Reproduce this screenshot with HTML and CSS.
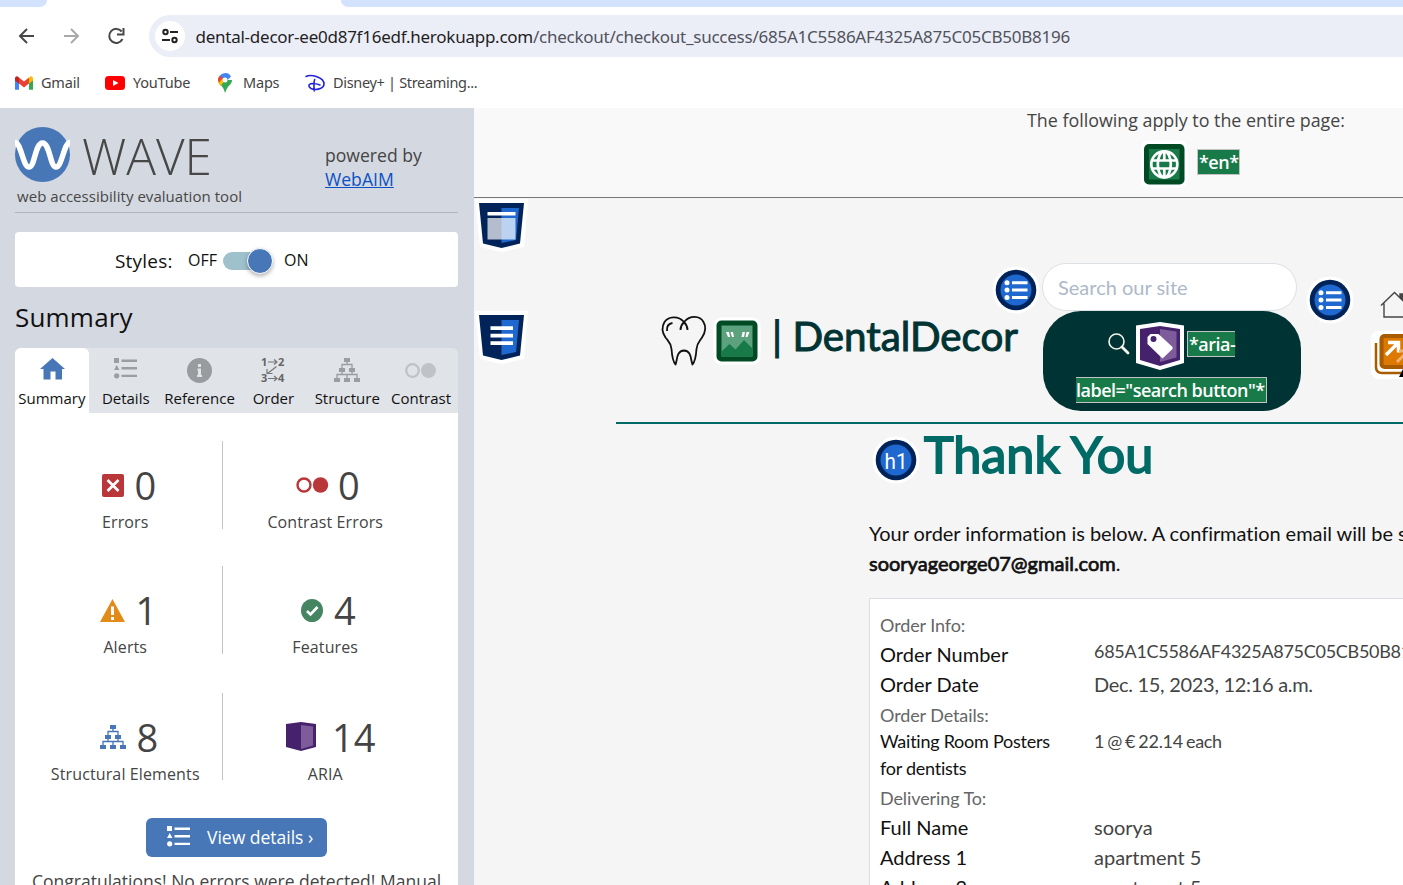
FILE: index.html
```html
<!DOCTYPE html>
<html lang="en">
<head>
<meta charset="utf-8">
<title>Checkout success</title>
<link rel="stylesheet" href="styles.css">
</head>
<body>
<svg class="defs" width="0" height="0">
  <defs>
    <symbol id="tree" viewBox="0 0 26 24">
      <path d="M10 0h6v4h-6zM5 10h6v4H5zM15 10h6v4h-6zM0 20h6v4H0zM10 20h6v4h-6zM20 20h6v4h-6z"/>
      <path d="M13 4v3M8 10V6.500h10V10M8 14v3M18 14v3M3 20v-3.500h20V20M13 20v-3.500" fill="none" stroke="currentColor" stroke-width="1.300"/>
    </symbol>
    <symbol id="list" viewBox="0 0 24 21">
      <path d="M0 0h5v5H0zM2.700 7l2.800 5H0z"/><circle cx="2.700" cy="17.800" r="2.600"/>
      <path d="M7.500 1.500H23v2.400H7.500zM7.500 9H23v2.400H7.500zM7.500 16.700H23v2.400H7.500z"/>
    </symbol>
    <symbol id="bullets" viewBox="0 0 48 48">
      <circle cx="24" cy="24" r="23.500" fill="#fff"/><circle cx="24" cy="24" r="20.300" fill="#00245a"/><circle cx="24" cy="24" r="15.500" fill="#1f68cf"/>
      <path d="M20 15.300h15.500v2.900H20zM20 22.600h15.500v2.900H20zM20 30h15.500v2.900H20z" fill="#fff"/>
      <circle cx="15" cy="16.700" r="2.500" fill="#fff"/><circle cx="15" cy="24" r="2.500" fill="#fff"/><circle cx="15" cy="31.500" r="2.500" fill="#fff"/>
    </symbol>
    <symbol id="shield" viewBox="0 0 53 53">
      <path d="M0 0h53l-4 48-22.500 5L5 48z" fill="#fff"/>
      <path d="M4 4h45l-4 40.500-18.500 4.500L8 44.500z" fill="#00245a"/>
      <path d="M26.500 9H44l-3 32-14.500 3z" fill="#1f68cf"/>
    </symbol>
  </defs>
</svg>

<header class="chrome">
  <div class="tabstrip"><i class="tab-l"></i><i class="tab-r"></i></div>
  <div class="toolbar">
    <svg class="nav" width="150" height="50" fill="none" stroke="#474747" stroke-width="2">
      <path d="M34 29H20.500M27 22l-7 7 7 7"/>
      <path d="M64 29h13.500M71 22l7 7-7 7" stroke="#a9a9a9"/>
      <path d="M122.500 32a7 7 0 1 1-.8-7.500M123.500 21v6.500H117"/>
    </svg>
    <div class="omnibox">
      <svg class="site" width="30" height="30"><circle cx="15" cy="15" r="15" fill="#fff"/><g fill="none" stroke="#222" stroke-width="2"><circle cx="10.500" cy="11" r="2.200"/><circle cx="19.500" cy="19" r="2.200"/><path d="M15 11h8M7 19h8"/></g></svg>
      <span class="url">dental-decor-ee0d87f16edf.herokuapp.com<span class="path">/checkout/checkout_success/685A1C5586AF4325A875C05CB50B8196</span></span>
    </div>
  </div>
  <nav class="bookmarks">
    <a class="bm gmail"><svg width="18" height="14"><path d="M0 2v11.800h4V6z" fill="#4285f4"/><path d="M14 6v7.800h4V2z" fill="#34a853"/><path d="M0 2v2.500l4 3V1.500Q1-1 0 2" fill="#c5221f"/><path d="M14 1.500v6l4-3V2Q17-1 14 1.500" fill="#fbbc04"/><path d="M4 1.500l5 4 5-4v6l-5 4-5-4z" fill="#ea4335"/></svg><span>Gmail</span></a>
    <a class="bm youtube"><svg width="20" height="14"><rect width="20" height="14" rx="3.500" fill="#f00"/><path d="M8 4l5.500 3L8 10z" fill="#fff"/></svg><span>YouTube</span></a>
    <a class="bm maps"><svg width="14" height="20"><path d="M7 20c-1-3-1-4-3-6.500C1.500 10.500 0 9.500 0 7h14c0 4-3 5-5 8.500C8 17.500 8 18 7 20" fill="#34a853"/><path d="M0 7c0 2.500 1 4 2.500 6L9 5 2 2.500Q0 4.500 0 7" fill="#fbbc04"/><path d="M2 2.500Q0 4.500 0 7l1 2.500L6 4z" fill="#ea4335"/><path d="M2 2.500C5-1 11-1 13 3.500L8.500 8 6 4.500 4 5z" fill="#4285f4"/><circle cx="7" cy="7" r="2.500" fill="#fff"/></svg><span>Maps</span></a>
    <a class="bm disney"><svg width="20" height="18" fill="none" stroke="#2323dc" stroke-width="1.600" stroke-linecap="round"><path d="M1 2.500C6 0 19 3 19 10c0 5-9 6.500-13 4.500-3-2-3-4.500 1-5 3 0 6 .5 8 1.500M9.700 5.500C8.500 8 9 14 9.200 17"/></svg><span>Disney+ | Streaming...</span></a>
  </nav>
</header>

<main class="main">
  <aside class="sidebar">
    <div class="brand">
      <svg class="wave-logo" width="240" height="84">
        <circle cx="27.500" cy="27.500" r="27.500" fill="#4777b6"/>
        <path d="M0 15.500C6 15.500 8 40 14 40S20 16 27.500 16 35 40 41 40 49 15.500 55 15.500" fill="none" stroke="#fff" stroke-width="5.500"/>
        <text class="wave-word" x="67" y="48" textLength="130" lengthAdjust="spacingAndGlyphs">WAVE</text>
        <text class="wave-tag" x="2" y="75" textLength="225">web accessibility evaluation tool</text>
      </svg>
      <p class="powered">powered by<br><a>WebAIM</a></p>
    </div>
    <div class="styles"><span class="styles-label">Styles:</span><span class="off">OFF</span><span class="toggle"><i></i></span><span>ON</span></div>
    <h2 class="heading">Summary</h2>
    <div class="tabs">
      <div class="tab active"><svg width="26" height="24"><path d="M13.500 0L26 11h-3V21.500h-6.500v-8h-5v8H4.500V11H1z" fill="#4777b6"/></svg><span>Summary</span></div>
      <div class="tab"><svg width="24" height="24" fill="#9a9da1"><use href="#list" y="0" width="24" height="21"/></svg><span>Details</span></div>
      <div class="tab"><svg width="26" height="26"><circle cx="12.500" cy="13.500" r="12.500" fill="#999c9f"/><path d="M11 7h3v3h-3zM10.500 11.500H14V18h1v2h-5v-2h1v-4.500h-.5z" fill="#e0e3e7"/></svg><span>Reference</span></div>
      <div class="tab"><svg width="24" height="26" class="order"><text x="0" y="8.500">1</text><text x="17" y="8.500">2</text><text x="0" y="25">3</text><text x="17" y="25">4</text><path d="M7 5h9M13 2.500l3 2.500-3 2.500M7 21.500h9M13 19l3 2.500-3 2.500M15.500 9.500L6.500 16.500M6 12v4.500h5.500" fill="none" stroke="#777" stroke-width="1.200"/></svg><span>Order</span></div>
      <div class="tab gray"><svg width="26" height="24"><use href="#tree" width="26" height="24"/></svg><span>Structure</span></div>
      <div class="tab"><svg width="32" height="24"><circle cx="7.500" cy="12.500" r="6.300" fill="none" stroke="#bfc2c6" stroke-width="2.300"/><circle cx="23.500" cy="12.500" r="7.500" fill="#bfc2c6"/></svg><span>Contrast</span></div>
    </div>
    <section class="panel">
      <div class="stats">
        <div class="stat"><div class="count errors"><svg width="22" height="23"><rect width="22" height="23" rx="2" fill="#b93639"/><path d="M5.500 6l11 11M16.500 6l-11 11" stroke="#fff" stroke-width="2.600"/></svg><b>0</b></div><span>Errors</span></div>
        <div class="stat"><div class="count contrast"><svg width="33" height="16"><circle cx="8" cy="8" r="6.500" fill="none" stroke="#b93639" stroke-width="2.400"/><circle cx="24.500" cy="8" r="7.700" fill="#b93639"/></svg><b>0</b></div><span>Contrast Errors</span></div>
        <div class="stat"><div class="count alerts"><svg width="25" height="23"><path d="M12.500 0L25 23H0z" fill="#e28b17"/><path d="M11 7.500h3V16h-3zM11 18h3v3h-3z" fill="#fff"/></svg><b>1</b></div><span>Alerts</span></div>
        <div class="stat"><div class="count features"><svg width="22" height="23"><ellipse cx="11" cy="11.500" rx="11" ry="11.500" fill="#458562"/><path d="M6 12l3.500 3.500L16.500 8" fill="none" stroke="#fff" stroke-width="2.600"/></svg><b>4</b></div><span>Features</span></div>
        <div class="stat last"><div class="count structural"><svg width="26" height="24"><use href="#tree" width="26" height="24"/></svg><b>8</b></div><span>Structural Elements</span></div>
        <div class="stat last"><div class="count aria"><svg width="30" height="29"><path d="M0 2L15 0l15 2v23l-15 4L0 25z" fill="#46226c"/><path d="M15 3l12 1.500v19L15 27z" fill="#7e5b9b"/></svg><b>14</b></div><span>ARIA</span></div>
      </div>
      <a class="button"><svg width="24" height="21" fill="#fff"><use href="#list" width="24" height="21"/></svg><span>View details ›</span></a>
      <p class="congrats">Congratulations! No errors were detected! Manual</p>
    </section>
  </aside>

  <div class="site-view">
    <div class="site-page">
      <section class="whole-page">
        <p>The following apply to the entire page:</p>
        <div class="whole-row">
          <svg width="48" height="48"><rect x=".5" y=".5" width="47" height="47" rx="8" fill="#fff"/><rect x="4" y="4" width="40.500" height="40.500" rx="5" fill="#004b24"/><rect x="9" y="9" width="30.500" height="30.500" fill="#177a48"/><g fill="none" stroke="#fff" stroke-width="2.700"><circle cx="24.300" cy="24.300" r="13"/><ellipse cx="24.300" cy="24.300" rx="6.500" ry="13"/><path d="M11 20.500h26.500M11 28.500h26.500M24.300 11v10M24.300 28v9"/></g></svg>
          <span class="note">*en*</span>
        </div>
      </section>

      <svg class="landmark first" width="53" height="53"><use href="#shield"/><path d="M12.500 13h28v3.500h-28z" fill="#fff"/><path d="M12.500 19h28v21.500h-28z" fill="#fff" opacity=".7"/></svg>
      <svg class="landmark second" width="53" height="53"><use href="#shield"/><path d="M15.500 15.300h22.500v3.700H15.500zM15.500 22.700h22.500v3.700H15.500zM15.500 30.300h22.500V34H15.500z" fill="#fff"/></svg>

      <div class="site-header">
        <div class="logo">
          <svg class="tooth" width="44" height="51" fill="none" stroke="#111" stroke-width="1.800" stroke-linejoin="round"><path d="M22 6C16-1 6 .5 2.500 6-.5 11 .5 17 3.500 21.500 7 26 9 27 9.500 33c.5 7 1 12 4 15.500 2-4 .5-13.500 8.500-14 8 .5 6.500 10 8.500 14 3-3.500 3.500-8.500 4-15.500.5-6 2.500-7 5.500-11.500C43 17 44.500 11 41.500 6 38-.5 28-1 22 6M18.500 14c0-3.500 1.500-6 3.500-8M25.500 14c0-3.500-1.500-6-3.500-8M5 15c-.5-5 2-7.500 5.500-8"/></svg>
          <svg class="alt-icon" width="48" height="48"><rect x=".5" y=".5" width="47" height="47" rx="8" fill="#fff"/><rect x="3.500" y="3.500" width="41" height="41" rx="5" fill="#004b24"/><rect x="8.500" y="8.500" width="31" height="31" fill="#5da27e"/><path d="M8.500 34.500l8-7.500 6 5.500 8.500-9.500 8.500 8.500v8h-31z" fill="#177a48"/><path d="M13 15h3l1 5h-2zM17.500 15h2.500l1 5h-2zM29.500 15h2.500l-1 5h-2.500zM33.500 15h3l-2 5h-2z" fill="#fff"/></svg>
          <span class="logo-text">| DentalDecor</span>
        </div>
        <svg class="list-icon a" width="48" height="48"><use href="#bullets"/></svg>
        <form class="search">
          <div class="field">Search our site</div>
          <div class="search-button">
            <div class="search-line">
              <svg class="lens" width="22" height="22" fill="none" stroke="#f4f4ea"><circle cx="8.500" cy="8.500" r="7.500" stroke-width="1.600"/><path d="M14 14l6 6" stroke-width="2.800" stroke-linecap="round"/></svg>
              <svg width="48" height="48"><path d="M0 3.500L24 0l24 3.500V41l-24 7L0 41z" fill="#fff"/><path d="M4 7l20-3 20 3v31l-20 6-20-6z" fill="#46226c"/><path d="M24 7l16.500 2.500v26L24 40z" fill="#7e5b9b"/><path d="M11.500 15l3-3h8L36.500 25v2L26.500 36.500 11.500 22z" fill="#fff"/><circle cx="17.500" cy="17" r="3" fill="#46226c"/></svg>
              <span class="note">*aria-</span>
            </div>
            <span class="note wide">label="search button"*</span>
          </div>
        </form>
        <svg class="list-icon b" width="48" height="48"><use href="#bullets"/></svg>
        <div class="home">
          <svg class="house" width="36" height="28" fill="none" stroke="#444" stroke-width="1.400"><path d="M1 14.500L14.500 1.500 28 14.500M4 12.500V26h20V12.500"/><path d="M20 3h3v6l-3-3z" fill="#444"/></svg>
          <svg class="ext" width="48" height="48"><rect width="48" height="48" rx="8" fill="#fff"/><path d="M5 12v24q0 6 6 6h20" fill="none" stroke="#a85b00" stroke-width="2.500"/><rect x="10.500" y="5" width="34" height="31" rx="3" fill="#dd7800" stroke="#a85b00" stroke-width="4"/><path d="M15 24l11-11M17 11.500h10.500v10" fill="none" stroke="#fff" stroke-width="3.500"/><path d="M26 31l9-9M28 20h9" fill="none" stroke="#f0b36d" stroke-width="3"/><path d="M28 46l8-16v16z" fill="#000"/></svg>
        </div>
      </div>

      <div class="checkout">
        <div class="title-row"><svg width="48" height="48"><circle cx="24" cy="24" r="23.500" fill="#fff"/><circle cx="24" cy="24" r="20.300" fill="#00245a"/><circle cx="24" cy="24" r="15.500" fill="#1f68cf"/><text class="h1-mark" x="12.500" y="32.500" textLength="23" lengthAdjust="spacingAndGlyphs">h1</text></svg><h1>Thank You</h1></div>
        <p class="info">Your order information is below. A confirmation email will be sent to<br><strong>sooryageorge07@gmail.com</strong>.</p>
        <div class="order-box">
          <div class="sub">Order Info:</div>
          <div class="row"><span>Order Number</span><span class="small number">685A1C5586AF4325A875C05CB50B8196</span></div>
          <div class="row"><span>Order Date</span><span class="date">Dec. 15, 2023, 12:16 a.m.</span></div>
          <div class="sub details">Order Details:</div>
          <div class="row item"><span>Waiting Room Posters<br>for dentists</span><span class="price">1 @ € 22.14 each</span></div>
          <div class="sub deliver">Delivering To:</div>
          <div class="row"><span>Full Name</span><span>soorya</span></div>
          <div class="row"><span>Address 1</span><span>apartment 5</span></div>
          <div class="row"><span>Address 2</span><span>apartment 5</span></div>
        </div>
      </div>
    </div>
  </div>
</main>
</body>
</html>
```

FILE: styles.css
```css
* { box-sizing: border-box; }
body { margin: 0; width: 1403px; height: 885px; overflow: hidden; font-family: "Open Sans", sans-serif; background: #fff; color: #444; }
p, h1, h2 { margin: 0; }
svg { flex: none; display: block; overflow: visible; }
.defs { position: absolute; }

/* browser chrome */
.chrome { height: 108px; background: #fff; }
.tabstrip { height: 7px; display: flex; justify-content: space-between; }
.tab-l { width: 47px; height: 7px; background: #d3e3fd; border-radius: 0 0 14px 0; }
.tab-r { width: 1062px; height: 7px; background: #d3e3fd; border-radius: 0 0 0 14px; }
.toolbar { height: 50px; display: flex; align-items: center; }
.nav { margin-right: -1px; }
.omnibox { width: 1280px; flex: none; height: 42px; margin-top: 8px; border-radius: 21px 0 0 21px; background: #eceef7; display: flex; align-items: center; padding-left: 6px; }
.url { margin-left: 10.500px; font: 17px "Noto Sans", sans-serif; letter-spacing: -0.25px; color: #1f1f1f; white-space: nowrap; }
.path { color: #50535c; }
.bookmarks { height: 49px; display: flex; align-items: center; padding-left: 15px; font: 14.5px "Noto Sans", sans-serif; letter-spacing: -0.2px; color: #444; }
.bm { display: flex; align-items: center; white-space: nowrap; }
.bm svg { margin-top: 2px; }
.gmail { gap: 8px; width: 90px; }
.youtube { gap: 8px; width: 113px; }
.maps { gap: 11px; width: 87px; }
.disney { gap: 8px; letter-spacing: -0.32px; }

.main { display: flex; height: 777px; }
.sidebar { width: 474px; flex: none; padding: 0 16px 0 15px; background: #d4d8e0; overflow: hidden; }
.brand { height: 105px; padding-top: 19px; border-bottom: 1px solid #b2b5b9; display: flex; }
.wave-word { font: 300 50px "Open Sans"; fill: #474747; }
.wave-tag { font: 15px "Open Sans"; fill: #474747; }
.powered { margin: 16px 0 0 70px; font-size: 17.6px; line-height: 24px; white-space: nowrap; }
.powered a { color: #0b51c5; text-decoration: underline; }
.styles { height: 55px; margin-top: 19px; padding-left: 100px; border-radius: 4px; background: #fff; color: #111; display: flex; align-items: center; font-size: 16px; }
.styles-label { width: 73px; padding-top: 2px; font-size: 19px; letter-spacing: .2px; }
.off { width: 35px; }
.toggle { width: 48px; height: 18px; margin: 2px 13px 0 0; border-radius: 9px; background: #9fc1cb; display: flex; align-items: center; justify-content: flex-end; }
.toggle i { width: 26px; height: 26px; margin-right: -2px; flex: none; border-radius: 50%; border: 1px solid #fff; background: #4777b6; box-shadow: 0 2px 4px rgba(0,0,0,.3); }
.heading { height: 61px; line-height: 60px; font-size: 26px; letter-spacing: .2px; font-weight: 400; color: #111; }
.tabs { display: grid; grid-template-columns: repeat(6, 1fr); height: 65px; border-radius: 6px 6px 0 0; background: #e0e3e7; font-size: 15px; color: #111; }
.tab { display: grid; grid-template-rows: 26px 26px; padding-top: 9px; justify-content: center; justify-items: center; align-items: center; white-space: nowrap; line-height: 26px; }
.tab > span { padding-top: 3px; }
.active { background: #fff; border-radius: 6px 6px 0 0; }
.gray svg { fill: #9a9da1; color: #9a9da1; }
.order text { font: bold 11px "Open Sans"; fill: #666; }
.panel { height: 480px; background: #fff; padding-top: 28px; }
.stats { display: grid; grid-template-columns: 195px 204px; grid-auto-rows: 88px; row-gap: 37px; margin-left: 13px; height: 340px; }
.stat { display: flex; flex-direction: column; align-items: center; }
.stat.last { margin: 2px 0 -1px; height: 87px; }
.stat:nth-child(odd) { border-right: 1px solid #c3c3c3; }
.stat > span { font-size: 16px; line-height: 22px; letter-spacing: .12px; padding-left: .5px; }
.count { height: 70px; flex: none; align-self: stretch; display: flex; align-items: center; padding-top: 18px; }
.count b { font-weight: 400; font-size: 38px; line-height: 50px; }
.errors, .alerts, .structural { padding-left: 74px; gap: 10.500px; }
.alerts, .structural { padding-left: 72px; }
.structural svg { fill: #4777b6; color: #4777b6; }
.contrast { padding-left: 73px; gap: 9px; }
.features { padding-left: 78px; gap: 11px; }
.aria { padding-left: 63px; gap: 16px; }
.aria svg { margin-top: -2px; }
.button { width: 181px; height: 39px; margin: 37px 0 0 131px; padding: 0 0 2px 21px; border-radius: 6px; background: #4777b6; color: #fff; display: flex; align-items: center; gap: 16px; font-size: 17.5px; white-space: nowrap; }
.congrats { margin: 10px 0 0 17px; font-size: 17.5px; line-height: 28px; white-space: nowrap; }

/* evaluated page */
.site-view { width: 929px; flex: none; overflow: hidden; background: #f5f5f5; }
.site-page { width: 1424px; position: relative; }
.whole-page { height: 90px; background: #f9f9f9; border-bottom: 1px solid #777; text-align: center; font-size: 17.85px; color: #444; }
.whole-page p { line-height: 25px; }
.whole-row { display: flex; justify-content: flex-start; padding: 7px 0 0 666px; gap: 9px; }
.note { height: 26px; margin-top: 9px; padding: 0 0 0 1px; border: 1px solid #c3c3c3; background: #177a48; color: #fff; font: 600 18px/24px "Open Sans"; letter-spacing: -0.5px; white-space: nowrap; }
.landmark { position: absolute; left: 1px; }
.landmark.first { top: 91px; }
.landmark.second { top: 203px; }
.site-header { height: 226px; margin-left: 142px; padding-left: 46px; border-bottom: 2px solid #006a66; display: flex; align-items: flex-start; font-family: Lato, sans-serif; }
.logo { display: flex; margin-top: 118px; width: 329.500px; white-space: nowrap; }
.alt-icon { margin: 1px 0 0 7px; }
.logo-text { margin: -5px 0 0 11px; font-size: 40.300px; line-height: 50px; color: #033; -webkit-text-stroke: 1px #033; }
.list-icon.a { margin-top: 68px; }
.search { width: 259px; margin: 65px 0 0 3.500px; flex: none; }
.field { width: 255px; height: 48px; margin-left: -1px; padding-left: 15px; border: 1px solid #dde0e5; border-radius: 24px; background: #fff; color: #adb9c9; font-size: 20px; line-height: 47px; }
.search-button { width: 258px; height: 100px; border-radius: 38px; background: #033; overflow: hidden; }
.search-line { display: flex; padding: 11px 0 0 65px; height: 66px; }
.lens { margin: 11px 6px 0 0; }
.search-line .note { margin: 9px 0 0 3px; border-right: 0; }
.wide { display: block; width: 191px; margin: 0 0 0 33px; border-left: 0; padding: 0; }
.list-icon.b { margin: 78px 0 0 3.500px; }
.home { margin: 93px 0 0 20px; }
.house { margin-left: 6px; }
.ext { margin: 12px 0 0 -3px; }
.checkout { margin-left: 395px; font-family: Lato, sans-serif; color: #111; }
.title-row { display: flex; height: 94px; padding-left: 3px; padding-top: 12px; }
h1 { margin: -13px 0 0 4px; font-size: 50.300px; font-weight: 400; line-height: 62px; color: #006a66; -webkit-text-stroke: 1.800px #006a66; }
.info { height: 80px; font-size: 20px; line-height: 30px; white-space: nowrap; font-variant-ligatures: none; letter-spacing: -0.05px; }
.info strong { font-weight: 400; letter-spacing: 0; -webkit-text-stroke: .7px #111; }
.order-box { width: 760px; height: 400px; padding: 12px 10px; border: 1px solid #dcdce4; background: #fff; font-size: 20px; font-variant-ligatures: none; }
.sub { height: 28px; line-height: 28px; font-size: 18px; letter-spacing: -0.1px; color: #666; }
.details { height: 29px; line-height: 32px; }
.deliver { height: 30px; line-height: 33px; }
.row { height: 30px; line-height: 30px; display: grid; grid-template-columns: 214px 1fr; }
.row > :last-child { color: #444; }
.row > .number { font-size: 18px; line-height: 24px; letter-spacing: -0.28px; }
.row > .date { letter-spacing: -0.3px; }
.item { height: 54px; line-height: 27px; font-size: 18px; letter-spacing: -0.25px; }
.row > .price { letter-spacing: -0.3px; word-spacing: -1.2px; }
.h1-mark { font: 22px Roboto; fill: #fff; }
```
